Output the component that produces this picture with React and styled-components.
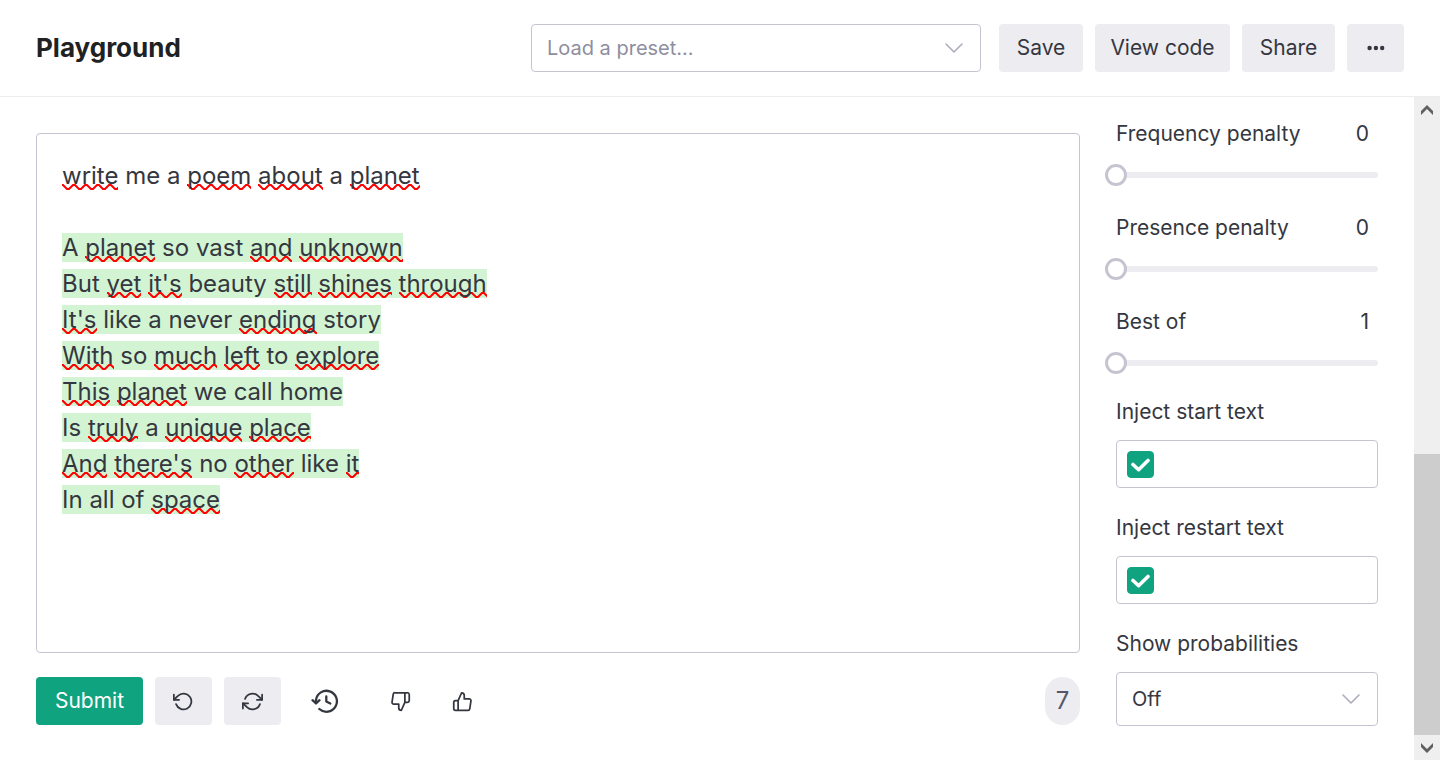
import React from 'react';
import styled, { createGlobalStyle } from 'styled-components';
import { FiRotateCcw, FiRefreshCw, FiThumbsDown, FiThumbsUp } from 'react-icons/fi';

const GlobalStyle = createGlobalStyle`
  *, *::before, *::after { box-sizing: border-box; }
  body { margin: 0; background: #fff; }
  body, button, input, select {
    font-family: Inter, "Liberation Sans", sans-serif;
    color: #353740;
  }
`;

const Page = styled.div`
  display: flex;
  flex-direction: column;
  min-height: 100vh;
`;

const Header = styled.header`
  display: flex;
  align-items: center;
  gap: 12px;
  padding: 24px 36px;
  border-bottom: 1px solid #ececf1;
`;

const Title = styled.h1`
  flex: 1;
  margin: 0;
  font-size: 26px;
  line-height: 36px;
  font-weight: 700;
  color: #202123;
`;

const Button = styled.button`
  display: inline-flex;
  align-items: center;
  justify-content: center;
  height: 48px;
  width: ${(p) => p.$width || '57px'};
  padding: 0;
  border: 0;
  border-radius: 4px;
  background: ${(p) => (p.$primary ? '#10a37f' : '#ececf1')};
  color: ${(p) => (p.$primary ? '#fff' : '#353740')};
  font-size: 21px;
  line-height: 24px;
  white-space: nowrap;
  cursor: pointer;
`;

const GhostButton = styled(Button)`
  width: 50px;
  background: transparent;
`;

const SelectWrap = styled.div`
  display: grid;
  align-items: center;
  width: ${(p) => p.$width || '100%'};
  margin-right: ${(p) => (p.$spaced ? '6px' : '0')};

  > * { grid-area: 1 / 1; }
  > svg { justify-self: end; margin-right: 18px; pointer-events: none; }
`;

const Select = styled.select`
  appearance: none;
  width: 100%;
  height: ${(p) => (p.$tall ? '54px' : '48px')};
  padding: 0 48px 0 15px;
  border: 1px solid #c5c5d2;
  border-radius: 4px;
  background: #fff;
  color: ${(p) => (p.$placeholder ? '#8e8ea0' : '#353740')};
  font-size: 20px;
`;

const Body = styled.div`
  flex: 1;
  display: flex;
`;

const Main = styled.main`
  flex: 1;
  display: flex;
  flex-direction: column;
  gap: 24px;
  padding: 36px 36px 35px;
`;

const Editor = styled.div`
  flex: 1;
  padding: 24px 25px;
  border: 1px solid #c5c5d2;
  border-radius: 4px;
  font-size: 24px;
  line-height: 36px;
`;

const Line = styled.p`
  margin: 0;
  min-height: 36px;
`;

const Completion = styled.span`
  background: #d2f4d3;
`;

const Misspelled = styled.span`
  background: url("data:image/svg+xml,%3Csvg xmlns='http://www.w3.org/2000/svg' width='12' height='6'%3E%3Cpath d='M-5 5L-1 1L1 1L5 5L7 5L11 1L13 1' fill='none' stroke='red' stroke-width='2'/%3E%3C/svg%3E") left bottom / 12px 6px repeat-x;
`;

const Toolbar = styled.div`
  display: flex;
  align-items: center;
  gap: 12px;
`;

const History = styled.div`
  display: flex;
  padding: 0 13px 0 7px;
`;

const TokenCount = styled.output`
  margin-left: auto;
  min-width: 35px;
  border-radius: 18px;
  background: #ececf1;
  color: #565869;
  font-size: 24px;
  line-height: 48px;
  text-align: center;
`;

const Sidebar = styled.aside`
  display: flex;
  flex-direction: column;
  gap: 26px;
  width: 298px;
  padding: 21px 36px 34px 0;
`;

const Stack = styled.div`
  display: flex;
  flex-direction: column;
  gap: ${(p) => p.$gap};
`;

const FieldHead = styled.div`
  display: flex;
  justify-content: space-between;
  padding-right: 9px;
  font-size: 21px;
  line-height: 32px;
`;

const Label = styled.label`
  font-size: 21px;
  line-height: 24px;
`;

const Range = styled.input`
  appearance: none;
  width: calc(100% + 11px);
  height: 22px;
  margin: 0 0 0 -11px;
  background: transparent;

  &::-webkit-slider-runnable-track {
    height: 6px;
    border-radius: 3px;
    background: linear-gradient(to right, transparent 11px, #ececf1 11px);
  }
  &::-webkit-slider-thumb {
    appearance: none;
    width: 22px;
    height: 22px;
    margin-top: -8px;
    border: 3px solid #c5c5d2;
    border-radius: 50%;
    background: #fff;
  }
`;

const TextBox = styled.div`
  display: flex;
  align-items: center;
  gap: 10px;
  height: 48px;
  padding: 0 10px;
  border: 1px solid #c5c5d2;
  border-radius: 4px;
`;

const CheckWrap = styled.span`
  display: grid;
  place-items: center;

  > * { grid-area: 1 / 1; }
  > svg { pointer-events: none; }
`;

const Checkbox = styled.input`
  appearance: none;
  width: 27px;
  height: 27px;
  margin: 0;
  border: 1px solid #10a37f;
  border-radius: 4px;
  &:checked { background: #10a37f; }
`;

const TextInput = styled.input`
  flex: 1;
  min-width: 0;
  border: 0;
  outline: 0;
  font-size: 20px;
`;

const ScrollBar = styled.div`
  display: flex;
  flex-direction: column;
  width: 26px;
  background: #efefef;
`;

const ScrollArrow = styled.span`
  display: grid;
  place-items: center;
  height: 25px;
`;

const ScrollSpace = styled.span`
  flex: 332;
`;

const ScrollThumb = styled.span`
  flex: 281;
  background: #cdcdcd;
`;

const Chevron = () => (
  <svg width="18" height="10" viewBox="0 0 18 10" fill="none" stroke="#acacbe" strokeWidth="1.6" strokeLinecap="round" strokeLinejoin="round">
    <path d="M1 1l8 8 8-8" />
  </svg>
);

const HistoryIcon = () => (
  <svg width="28" height="28" viewBox="0 0 28 28" fill="none" stroke="currentColor" strokeWidth="2.3" strokeLinecap="round" strokeLinejoin="round">
    <path d="M5 15v-2a10.5 10.5 0 1 1 3.3 9" />
    <path d="M1.500 13.200L5 16.500l3.500-3.300" />
    <path d="M15.300 9.500v5l4 2" />
  </svg>
);

const CheckIcon = () => (
  <svg width="19" height="19" viewBox="0 0 19 19" fill="none" stroke="#fff" strokeWidth="3.6" strokeLinecap="round" strokeLinejoin="round">
    <path d="M2 9.500l5.600 5.200L17 5.500" />
  </svg>
);

const DotsIcon = () => (
  <svg width="18" height="6" viewBox="0 0 18 6" fill="currentColor">
    <circle cx="2.600" cy="3" r="2.200" />
    <circle cx="8.900" cy="3" r="2.200" />
    <circle cx="15.200" cy="3" r="2.200" />
  </svg>
);

const ArrowIcon = ({ down }) => (
  <svg width="14" height="12" viewBox="0 0 14 12" fill="#606060">
    <path d={down ? 'M1 1l6 6 6-6v4l-6 6-6-6z' : 'M1 11l6-6 6 6V7L7 1 1 7z'} />
  </svg>
);

// Words wrapped in asterisks carry the spell-check underline.
const prompt = '*write* me a *poem* *about* a *planet*';
const poem = [
  'A *planet* so vast *and* *unknown*',
  "But *yet* *it's* beauty *still* *shines* *through*",
  "*It's* like a never *ending* story",
  '*With* so *much* *left* to *explore*',
  '*This* *planet* we call home',
  'Is *truly* a *unique* *place*',
  "*And* *there's* no *other* like *it*",
  'In all of *space*',
];

const Marked = ({ text }) =>
  text.split('*').map((part, i) => (i % 2 ? <Misspelled key={i}>{part}</Misspelled> : part));

const SliderField = ({ id, label, value, min, max }) => (
  <Stack $gap="14px">
    <FieldHead>
      <label htmlFor={id}>{label}</label>
      <output htmlFor={id}>{value}</output>
    </FieldHead>
    <Range id={id} type="range" min={min} max={max} defaultValue={value} />
  </Stack>
);

const InjectField = ({ id, label }) => (
  <Stack $gap="16px">
    <Label htmlFor={id}>{label}</Label>
    <TextBox>
      <CheckWrap>
        <Checkbox type="checkbox" defaultChecked aria-label={label} />
        <CheckIcon />
      </CheckWrap>
      <TextInput id={id} type="text" />
    </TextBox>
  </Stack>
);

export default function App() {
  return (
    <Page>
      <GlobalStyle />
      <Header>
        <Title>Playground</Title>
        <SelectWrap $width="450px" $spaced>
          <Select $placeholder aria-label="Preset">
            <option>Load a preset...</option>
          </Select>
          <Chevron />
        </SelectWrap>
        <Button $width="84px">Save</Button>
        <Button $width="135px">View code</Button>
        <Button $width="93px">Share</Button>
        <Button aria-label="More"><DotsIcon /></Button>
      </Header>
      <Body>
        <Main>
          <Editor role="textbox" aria-multiline="true" aria-label="Prompt" contentEditable suppressContentEditableWarning spellCheck={false}>
            <Line><Marked text={prompt} /></Line>
            <Line />
            {poem.map((line) => (
              <Line key={line}><Completion><Marked text={line} /></Completion></Line>
            ))}
          </Editor>
          <Toolbar>
            <Button $primary $width="107px">Submit</Button>
            <Button aria-label="Undo"><FiRotateCcw size={21} /></Button>
            <Button aria-label="Regenerate"><FiRefreshCw size={21} /></Button>
            <History>
              <GhostButton aria-label="History"><HistoryIcon /></GhostButton>
            </History>
            <GhostButton aria-label="Thumbs down"><FiThumbsDown size={21} /></GhostButton>
            <GhostButton aria-label="Thumbs up"><FiThumbsUp size={21} /></GhostButton>
            <TokenCount>7</TokenCount>
          </Toolbar>
        </Main>
        <Sidebar>
          <Stack $gap="26px">
            <SliderField id="frequency" label="Frequency penalty" value={0} min={0} max={2} />
            <SliderField id="presence" label="Presence penalty" value={0} min={0} max={2} />
            <SliderField id="best-of" label="Best of" value={1} min={1} max={20} />
          </Stack>
          <Stack $gap="28px">
            <InjectField id="start-text" label="Inject start text" />
            <InjectField id="restart-text" label="Inject restart text" />
            <Stack $gap="16px">
              <Label htmlFor="probabilities">Show probabilities</Label>
              <SelectWrap>
                <Select id="probabilities" $tall>
                  <option>Off</option>
                </Select>
                <Chevron />
              </SelectWrap>
            </Stack>
          </Stack>
        </Sidebar>
        <ScrollBar aria-hidden="true">
          <ScrollArrow><ArrowIcon /></ScrollArrow>
          <ScrollSpace />
          <ScrollThumb />
          <ScrollArrow><ArrowIcon down /></ScrollArrow>
        </ScrollBar>
      </Body>
    </Page>
  );
}
